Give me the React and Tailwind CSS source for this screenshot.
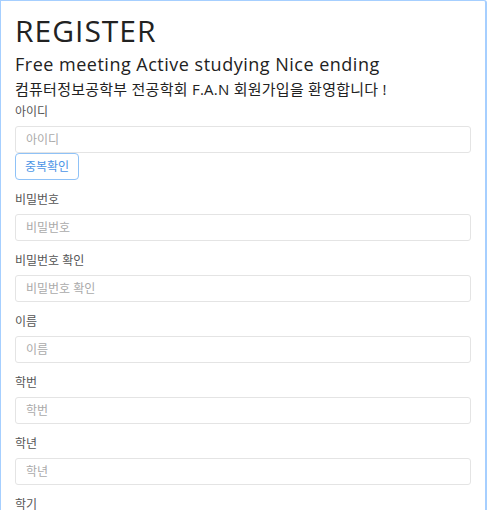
export default function App() {
  const fields = [
    { label: "비밀번호", ph: "비밀번호", type: "password" },
    { label: "비밀번호 확인", ph: "비밀번호 확인", type: "password" },
    { label: "이름", ph: "이름" },
    { label: "학번", ph: "학번" },
    { label: "학년", ph: "학년" },
    { label: "학기", ph: "학기" },
    { label: "전화번호", ph: "전화번호" },
  ];
  const font = { fontFamily: '"Open Sans", "Noto Sans CJK KR", sans-serif' };
  return (
    <div className="w-[487px] h-[510px] overflow-hidden bg-white" style={font}>
      <div className="h-[600px] border-l border-t border-r-2 border-[#a6cfff] rounded-tr-[3px] pl-[14px] pr-[14px] pt-[12px]">
        <h1 className="text-[30px] leading-[36px] tracking-[1px] text-[#222] font-normal">REGISTER</h1>
        <h2 className="mt-[4px] text-[18px] leading-[22px] tracking-[0.5px] text-[#222] font-normal">Free meeting Active studying Nice ending</h2>
        <h3 className="mt-[3px] text-[15px] leading-[22px] tracking-[0.25px] text-[#222] font-normal">컴퓨터정보공학부 전공학회 F.A.N 회원가입을 환영합니다 !</h3>
        <div className="mt-[2px]">
          <label className="block text-[12px] leading-[20px] text-[#555] mb-[4px]">아이디</label>
          <input className="block w-full h-[27px] border border-[#e4e4e4] rounded-[3px] px-[10px] text-[12px] placeholder-[#aaa] outline-none" placeholder="아이디" />
          <button className="block h-[27px] w-[64px] border border-[#8fc2f7] rounded-[4px] text-[12px] text-[#4c95e6] bg-white mb-[10px]">중복확인</button>
        </div>
        {fields.map((f) => (
          <div key={f.label} className="mb-[10px]">
            <label className="block text-[12px] leading-[20px] text-[#555] mb-[4px]">{f.label}</label>
            <input type={f.type || "text"} className="block w-full h-[27px] border border-[#e4e4e4] rounded-[3px] px-[10px] text-[12px] placeholder-[#aaa] outline-none" placeholder={f.ph} />
          </div>
        ))}
      </div>
    </div>
  );
}
